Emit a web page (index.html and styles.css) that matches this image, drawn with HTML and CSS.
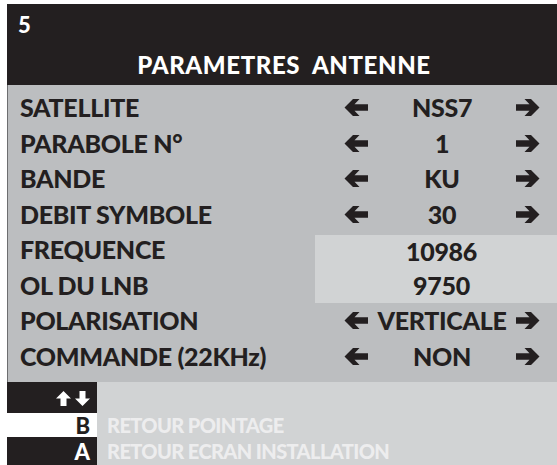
FILE: index.html
```html
<!DOCTYPE html>
<html lang="fr">
<head>
<meta charset="utf-8">
<title>Paramètres antenne</title>
<link rel="stylesheet" href="styles.css">
</head>
<body>
<div class="screen">
  <header class="head">
    <div class="num">5</div>
    <h1 class="title">PARAMETRES&nbsp; ANTENNE</h1>
  </header>

  <section class="panel">
    <div class="row">
      <span class="label">SATELLITE</span>
      <span class="sel">
        <svg class="arr" width="25" height="17" viewBox="0 0 25 17"><path d="M25 5.2H11.5L16.5 0H10L1.5 8.5L10 17H16.5L11.5 11.8H25Z"/></svg>
        <span class="val">NSS7</span>
        <svg class="arr" width="25" height="17" viewBox="0 0 25 17"><path d="M0 5.2H13.5L8.5 0H15L23.5 8.5L15 17H8.5L13.5 11.8H0Z"/></svg>
      </span>
    </div>
    <div class="row">
      <span class="label">PARABOLE N°</span>
      <span class="sel">
        <svg class="arr" width="25" height="17" viewBox="0 0 25 17"><path d="M25 5.2H11.5L16.5 0H10L1.5 8.5L10 17H16.5L11.5 11.8H25Z"/></svg>
        <span class="val">1</span>
        <svg class="arr" width="25" height="17" viewBox="0 0 25 17"><path d="M0 5.2H13.5L8.5 0H15L23.5 8.5L15 17H8.5L13.5 11.8H0Z"/></svg>
      </span>
    </div>
    <div class="row">
      <span class="label">BANDE</span>
      <span class="sel">
        <svg class="arr" width="25" height="17" viewBox="0 0 25 17"><path d="M25 5.2H11.5L16.5 0H10L1.5 8.5L10 17H16.5L11.5 11.8H25Z"/></svg>
        <span class="val">KU</span>
        <svg class="arr" width="25" height="17" viewBox="0 0 25 17"><path d="M0 5.2H13.5L8.5 0H15L23.5 8.5L15 17H8.5L13.5 11.8H0Z"/></svg>
      </span>
    </div>
    <div class="row">
      <span class="label">DEBIT SYMBOLE</span>
      <span class="sel">
        <svg class="arr" width="25" height="17" viewBox="0 0 25 17"><path d="M25 5.2H11.5L16.5 0H10L1.5 8.5L10 17H16.5L11.5 11.8H25Z"/></svg>
        <span class="val">30</span>
        <svg class="arr" width="25" height="17" viewBox="0 0 25 17"><path d="M0 5.2H13.5L8.5 0H15L23.5 8.5L15 17H8.5L13.5 11.8H0Z"/></svg>
      </span>
    </div>
    <div class="row">
      <span class="label">FREQUENCE</span>
      <span class="box box-top">10986</span>
    </div>
    <div class="row">
      <span class="label">OL DU LNB</span>
      <span class="box box-bottom">9750</span>
    </div>
    <div class="row">
      <span class="label">POLARISATION</span>
      <span class="sel">
        <svg class="arr" width="25" height="17" viewBox="0 0 25 17"><path d="M25 5.2H11.5L16.5 0H10L1.5 8.5L10 17H16.5L11.5 11.8H25Z"/></svg>
        <span class="val">VERTICALE</span>
        <svg class="arr" width="25" height="17" viewBox="0 0 25 17"><path d="M0 5.2H13.5L8.5 0H15L23.5 8.5L15 17H8.5L13.5 11.8H0Z"/></svg>
      </span>
    </div>
    <div class="row">
      <span class="label">COMMANDE (22KHz)</span>
      <span class="sel">
        <svg class="arr" width="25" height="17" viewBox="0 0 25 17"><path d="M25 5.2H11.5L16.5 0H10L1.5 8.5L10 17H16.5L11.5 11.8H25Z"/></svg>
        <span class="val">NON</span>
        <svg class="arr" width="25" height="17" viewBox="0 0 25 17"><path d="M0 5.2H13.5L8.5 0H15L23.5 8.5L15 17H8.5L13.5 11.8H0Z"/></svg>
      </span>
    </div>
  </section>

  <footer class="foot">
    <div class="frow frow-nav">
      <span class="key key-dark">
        <svg class="updown" width="34" height="15" viewBox="0 0 34 15"><path d="M7.5 0L15 7.5H10.5V15H4.5V7.5H0Z"/><path d="M23.5 0H29.5V7.5H34L26.5 15L19 7.5H23.5Z"/></svg>
      </span>
      <span class="ftext"></span>
    </div>
    <div class="frow frow-b">
      <span class="key key-light">B</span>
      <span class="ftext">RETOUR POINTAGE</span>
    </div>
    <div class="frow frow-a">
      <span class="key key-dark">A</span>
      <span class="ftext">RETOUR ECRAN INSTALLATION</span>
    </div>
  </footer>
</div>
</body>
</html>
```

FILE: styles.css
```css
html, body {
  margin: 0;
  padding: 0;
  background: #ffffff;
}

body {
  font-family: Lato, "Open Sans", "DejaVu Sans", sans-serif;
  font-weight: 900;
  color: #231f20;
  overflow: hidden;
}

.screen {
  margin: 4px 0 0 7px;
  width: 550px;
}

.head {
  background: #231f20;
  color: #ffffff;
  height: 81px;
  display: flex;
  flex-direction: column;
}

.num {
  font-size: 22px;
  line-height: 22px;
  padding: 10px 0 0 11px;
  height: 22px;
}

.title {
  margin: 0;
  font-size: 24px;
  line-height: 24px;
  font-weight: 900;
  text-align: center;
  letter-spacing: 0.6px;
  padding-top: 17px;
  padding-left: 4px;
}

.panel {
  background: #bcbec0;
  border-left: 1px solid #6d6e70;
  padding: 5px 0 8px 0;
}

.row {
  display: grid;
  grid-template-columns: 307px 28px 198px 16px;
  height: 35.5px;
  align-items: center;
  font-size: 25px;
  line-height: 35.5px;
  letter-spacing: -0.3px;
}

.label {
  grid-column: 1;
  padding-left: 12px;
  white-space: nowrap;
}

.sel {
  grid-column: 3;
  display: flex;
  justify-content: space-between;
  align-items: center;
}

.arr {
  display: block;
  width: 25px;
  height: 17px;
  fill: #231f20;
  flex: none;
}

.val {
  white-space: nowrap;
}

.box {
  grid-column: 2 / 5;
  align-self: stretch;
  background: #d1d3d4;
  text-align: center;
  padding-left: 11px;
}

.box-top {
  margin-top: 2.5px;
  line-height: 33px;
}

.foot {
  background: #d1d3d4;
  display: flex;
  flex-direction: column;
}

.frow {
  display: flex;
  align-items: stretch;
}

.frow-nav { height: 31px; }
.frow-b { height: 24px; }
.frow-a { height: 28px; }

.key {
  width: 90px;
  flex: none;
  box-sizing: border-box;
  padding-right: 7px;
  display: flex;
  justify-content: flex-end;
  align-items: center;
  font-size: 22px;
}

.key-dark {
  background: #231f20;
  color: #ffffff;
}

.key-light {
  background: #ffffff;
  color: #231f20;
}

.updown {
  display: block;
  width: 34px;
  height: 15px;
  fill: #ffffff;
  margin-top: 1px;
}

.ftext {
  padding-left: 10px;
  font-size: 20px;
  font-weight: 900;
  color: #ededee;
  display: flex;
  align-items: center;
  white-space: nowrap;
  letter-spacing: -0.6px;
}
```
